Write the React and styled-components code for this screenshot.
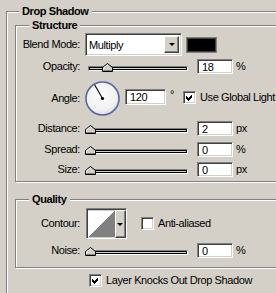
import React from "react";
import styled, { createGlobalStyle } from "styled-components";

const FACE = "#d4d0c8";

const GlobalStyle = createGlobalStyle`
  html, body { margin: 0; padding: 0; background: ${FACE}; overflow: hidden; }
  body {
    font-family: "Liberation Sans", Arial, sans-serif;
    font-size: 11px;
    line-height: 13px;
    letter-spacing: -0.4px;
    color: #000;
  }
  #root { width: 276px; height: 293px; overflow: hidden; }
`;

const Page = styled.div`
  padding: 11px 0 0 6px;
`;

const Group = styled.section`
  position: relative;
  box-sizing: border-box;
  width: ${(p) => p.$width}px;
  min-height: ${(p) => p.$minHeight || 0}px;
  border: 1px solid #808080;
  box-shadow: inset 1px 1px 0 #fff, 1px 1px 0 #fff;
  padding: ${(p) => p.$pad};
  margin-top: ${(p) => p.$mt || 0}px;
  display: flex;
  flex-direction: column;
  flex-shrink: 0;
`;

const GroupTitle = styled.h2`
  position: absolute;
  top: -7px;
  left: ${(p) => p.$left}px;
  margin: 0;
  padding: 0 3px;
  background: ${FACE};
  font-size: 11px;
  font-weight: bold;
  line-height: 13px;
  white-space: nowrap;
`;

const Row = styled.div`
  display: flex;
  align-items: center;
  height: ${(p) => p.$h}px;
  margin-top: ${(p) => p.$mt || 0}px;
  margin-left: ${(p) => p.$ml || 0}px;
`;

const Label = styled.span`
  width: 64px;
  margin-right: 5px;
  text-align: right;
  flex-shrink: 0;
  white-space: nowrap;
`;

const Select = styled.div`
  display: flex;
  box-sizing: border-box;
  width: 97px;
  height: 23px;
  border: 1px solid;
  border-color: #808080 #fff #fff #808080;
  box-shadow: inset 1px 1px 0 #404040, inset -1px -1px 0 ${FACE};
  background: #fff;
  padding: 2px;
  flex-shrink: 0;
`;

const SelectValue = styled.span`
  flex: 1;
  display: flex;
  align-items: center;
  padding: 2px 0 0 1px;
`;

const DropButton = styled.span`
  box-sizing: border-box;
  width: ${(p) => p.$w || 15}px;
  display: flex;
  align-items: center;
  justify-content: center;
  background: ${FACE};
  border: 1px solid;
  border-color: #fff #404040 #404040 #fff;
  box-shadow: inset -1px -1px 0 #808080;
`;

const Arrow = styled.span`
  width: 0;
  height: 0;
  border-left: 3px solid transparent;
  border-right: 3px solid transparent;
  border-top: 3px solid #000;
`;

const Swatch = styled.div`
  box-sizing: border-box;
  width: 31px;
  height: 16px;
  margin-left: 4px;
  border: 1px solid #808080;
  box-shadow: inset 0 0 0 1px #404040;
  background: #000;
`;

const SliderBox = styled.div`
  position: relative;
  box-sizing: border-box;
  width: 108px;
  height: 100%;
  margin-right: 4px;
  padding: 0 0 3px 3px;
  display: flex;
  align-items: flex-end;
  flex-shrink: 0;
`;

const Track = styled.div`
  box-sizing: border-box;
  width: 100px;
  height: 5px;
  border: 1px solid;
  border-color: #808080 #fff #fff #808080;
  box-shadow: inset 1px 1px 0 #000, inset -1px -1px 0 #000;
  background: ${FACE};
`;

const Thumb = styled.svg`
  position: absolute;
  bottom: 2px;
  width: 11px;
  height: 9px;
  display: block;
`;

const ValueInput = styled.div`
  box-sizing: border-box;
  width: ${(p) => p.$w || 36}px;
  height: ${(p) => p.$h || 15}px;
  border: 1px solid;
  border-color: #808080 #fff #fff #808080;
  box-shadow: inset 1px 1px 0 #404040, inset -1px -1px 0 ${FACE};
  background: #fff;
  padding: 1px 0 0 4px;
  line-height: 12px;
  flex-shrink: 0;
`;

const Unit = styled.span`
  margin-left: 3px;
`;

const AngleExtras = styled.div`
  display: flex;
  align-items: center;
  margin-left: 5px;
  margin-bottom: 3px;
`;

const Degree = styled.span`
  margin-left: 4px;
  margin-right: 9px;
  align-self: flex-start;
  margin-top: -1px;
`;

const CheckBox = styled.span`
  box-sizing: border-box;
  width: 13px;
  height: 13px;
  border: 1px solid;
  border-color: #808080 #fff #fff #808080;
  box-shadow: inset 1px 1px 0 #404040, inset -1px -1px 0 ${FACE};
  background: #fff;
  display: flex;
  flex-shrink: 0;
  margin-left: ${(p) => p.$ml || 0}px;
`;

const CheckText = styled.span`
  margin-left: 4px;
  white-space: nowrap;
`;

const ContourPicker = styled.div`
  display: flex;
  box-sizing: border-box;
  width: 41px;
  height: 31px;
  margin-left: 1px;
  border: 1px solid;
  border-color: #808080 #fff #fff #808080;
  box-shadow: inset 1px 1px 0 #404040;
  padding: 1px 0 0 1px;
  flex-shrink: 0;
`;

const ContourPreview = styled.svg`
  display: block;
  width: 28px;
  height: 28px;
`;

function Check({ checked, ml }) {
  return (
    <CheckBox $ml={ml}>
      {checked && (
        <svg width="11" height="11" viewBox="0 0 11 11" shapeRendering="crispEdges">
          <polygon points="2,4 4,6 8,2 8,5 4,9 2,7" fill="#000" />
        </svg>
      )}
    </CheckBox>
  );
}

function Slider({ pos }) {
  return (
    <SliderBox>
      <Track />
      <Thumb viewBox="0 0 11 9" style={{ left: Math.round(pos * 0.96) }}>
        <polygon points="0.5,8.5 0.5,4.5 5.5,0.5 10.5,4.5 10.5,8.5" fill={FACE} stroke="#000" />
        <polyline points="1.5,7.5 1.5,5 5.5,1.8" fill="none" stroke="#fff" />
        <line x1="1" y1="7.5" x2="10" y2="7.5" stroke="#808080" />
      </Thumb>
    </SliderBox>
  );
}

function Dial() {
  return (
    <svg width="35" height="35" viewBox="0 0 35 35">
      <defs>
        <radialGradient id="dialFill" cx="45%" cy="40%" r="65%">
          <stop offset="0" stopColor="#ffffff" />
          <stop offset="0.7" stopColor="#f1f1f1" />
          <stop offset="1" stopColor="#d8d8dc" />
        </radialGradient>
      </defs>
      <circle cx="17.5" cy="17.5" r="16.5" fill="url(#dialFill)" stroke="#5468a0" strokeWidth="1.6" />
      <line x1="17.5" y1="17.5" x2="9.6" y2="3.8" stroke="#000" strokeWidth="1.1" />
      <circle cx="17.5" cy="17.5" r="1.6" fill="#000" />
    </svg>
  );
}

function SliderRow({ label, value, unit, pos, mt }) {
  return (
    <Row $h={15} $mt={mt}>
      <Label>{label}</Label>
      <Slider pos={pos} />
      <ValueInput>{value}</ValueInput>
      <Unit>{unit}</Unit>
    </Row>
  );
}

export default function App() {
  return (
    <>
      <GlobalStyle />
      <Page>
        <Group $width={300} $minHeight={300} $pad="13px 0 0 8px">
          <GroupTitle $left={12}>Drop Shadow</GroupTitle>

          <Group $width={280} $pad="7px 0 4px 0">
            <GroupTitle $left={13}>Structure</GroupTitle>
            <Row $h={23}>
              <Label>Blend Mode:</Label>
              <Select>
                <SelectValue>Multiply</SelectValue>
                <DropButton>
                  <Arrow />
                </DropButton>
              </Select>
              <Swatch />
            </Row>
            <SliderRow label="Opacity:" value="18" unit="%" pos={18} mt={3} />
            <Row $h={35} $mt={7}>
              <Label>Angle:</Label>
              <Dial />
              <AngleExtras>
                <ValueInput $w={41} $h={16}>120</ValueInput>
                <Degree>°</Degree>
                <Check checked />
                <CheckText>Use Global Light</CheckText>
              </AngleExtras>
            </Row>
            <SliderRow label="Distance:" value="2" unit="px" pos={0} mt={5} />
            <SliderRow label="Spread:" value="0" unit="%" pos={0} mt={6} />
            <SliderRow label="Size:" value="0" unit="px" pos={0} mt={5} />
          </Group>

          <Group $width={280} $mt={17} $pad="8px 0 9px 0">
            <GroupTitle $left={13}>Quality</GroupTitle>
            <Row $h={31}>
              <Label>Contour:</Label>
              <ContourPicker>
                <ContourPreview viewBox="0 0 28 28" shapeRendering="crispEdges">
                  <rect width="28" height="28" fill="#fff" />
                  <polygon points="28,0 28,28 0,28" fill="#808080" />
                </ContourPreview>
                <DropButton $w={12}>
                  <Arrow />
                </DropButton>
              </ContourPicker>
              <Check ml={14} />
              <CheckText>Anti-aliased</CheckText>
            </Row>
            <SliderRow label="Noise:" value="0" unit="%" pos={0} mt={4} />
          </Group>

          <Row $h={13} $mt={6} $ml={74}>
            <Check checked />
            <CheckText>Layer Knocks Out Drop Shadow</CheckText>
          </Row>
        </Group>
      </Page>
    </>
  );
}
